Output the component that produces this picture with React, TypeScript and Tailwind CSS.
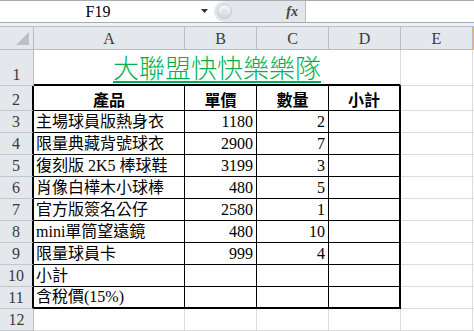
import React from "react"

const cellFont = "font-['Liberation_Serif','Noto_Sans_CJK_TC',serif]"
const cjk = "font-['Noto_Sans_CJK_TC','Liberation_Sans',sans-serif]"

type Item = { n: number; name: string; price?: number; qty?: number }

const items: Item[] = [
  { n: 3, name: "主場球員版熱身衣", price: 1180, qty: 2 },
  { n: 4, name: "限量典藏背號球衣", price: 2900, qty: 7 },
  { n: 5, name: "復刻版 2K5 棒球鞋", price: 3199, qty: 3 },
  { n: 6, name: "肖像白樺木小球棒", price: 480, qty: 5 },
  { n: 7, name: "官方版簽名公仔", price: 2580, qty: 1 },
  { n: 8, name: "mini單筒望遠鏡", price: 480, qty: 10 },
  { n: 9, name: "限量球員卡", price: 999, qty: 4 },
  { n: 10, name: "小計" },
  { n: 11, name: "含稅價(15%)" },
]

function RowHead({ n, inTable }: { n: number; inTable?: boolean }) {
  return (
    <div
      className={
        "w-[34px] shrink-0 h-full flex items-end justify-center pb-[1px] bg-[#e4e7eb] border-b border-[#c3c7cd] text-[16px] leading-[18px] text-[#3a3a3a] " +
        cellFont +
        (inTable ? " border-r-2 border-r-black" : " border-r border-r-[#b9bec5]")
      }
    >
      {n}
    </div>
  )
}

function Blank() {
  return (
    <>
      <div className="w-[72px] shrink-0 h-full border-r border-b border-[#dadcdd]" />
      <div className="flex-1 h-full border-b border-[#dadcdd]" />
    </>
  )
}

function DataRow({ item }: { item: Item }) {
  const last = item.n === 11
  const b = last ? " border-b-2" : " border-b"
  return (
    <div className="flex h-[22px]">
      <RowHead n={item.n} inTable />
      <div className={"w-[151px] shrink-0 h-full flex items-end pl-[2px] pb-[1px] border-r border-black text-[16px] leading-[18px] text-black whitespace-pre " + cellFont + b}>
        {item.name}
      </div>
      <div className={"w-[72px] shrink-0 h-full flex items-end justify-end pr-[3px] pb-[1px] border-r border-black text-[16px] leading-[18px] text-black " + cellFont + b}>
        {item.price}
      </div>
      <div className={"w-[72px] shrink-0 h-full flex items-end justify-end pr-[3px] pb-[1px] border-r border-black text-[16px] leading-[18px] text-black " + cellFont + b}>
        {item.qty}
      </div>
      <div className={"w-[72px] shrink-0 h-full border-r-2 border-black" + b} />
      <Blank />
    </div>
  )
}

export default function App() {
  return (
    <div className="w-[474px] h-[331px] overflow-hidden bg-white select-none">
      {/* formula bar */}
      <div className="h-[27px] bg-[#eef0f3] border-b border-[#b9bec5]">
        <div className="h-[23px] flex border-y border-[#a7acb3] bg-white">
          <div className="w-[214px] shrink-0 flex items-center relative">
            <div className="w-[196px] text-center text-[16px] leading-[20px] text-black font-['Liberation_Serif',serif]">F19</div>
            <svg className="absolute left-[201px] top-[8px]" width="7" height="4" viewBox="0 0 7 4">
              <path d="M0 0h7L3.5 4z" fill="#333" />
            </svg>
          </div>
          <div className="w-[92px] shrink-0 flex items-center bg-[#e3e6ea] rounded-l-[11px] border-r border-[#b9bec5] pl-[3px]">
            <div className="w-[15px] h-[15px] rounded-full bg-gradient-to-b from-[#fbfbfc] to-[#cfd3d8] border border-[#c6cad0] flex items-center justify-center">
              <div className="w-[5px] h-[5px] rounded-full bg-[#dfe2e6]" />
            </div>
            <span className="ml-auto mr-[7px] italic font-bold text-[14px] text-[#444] font-['Liberation_Serif',serif]">fx</span>
          </div>
          <div className="flex-1" />
        </div>
      </div>

      {/* column headers */}
      <div className={"flex h-[23px] bg-[#e4e7eb] border-b border-[#b9bec5] text-[16px] text-[#3a3a3a] " + cellFont}>
        <div className="w-[34px] shrink-0 h-full border-r border-[#b9bec5] relative">
          <svg className="absolute left-[16px] top-[5px]" width="13" height="13" viewBox="0 0 13 13">
            <path d="M13 0V13H0z" fill="#bcc1c8" />
          </svg>
        </div>
        {["A", "B", "C", "D", "E"].map((l, i) => (
          <div
            key={l}
            className={
              (i === 0 ? "w-[151px]" : "w-[72px]") +
              " shrink-0 h-full flex items-end justify-center pb-[1px] leading-[18px] border-r border-[#b9bec5]"
            }
          >
            {l}
          </div>
        ))}
        <div className="flex-1 h-full bg-[#f0b14a]" />
      </div>

      {/* row 1 */}
      <div className="flex h-[36px]">
        <RowHead n={1} />
        <div className={"w-[367px] shrink-0 h-full flex items-end justify-center border-b-2 border-r border-b-black border-r-[#dadcdd] " + cjk}>
          <span className="mb-[1px] inline-block border-b-2 border-[#00b050] text-[26px] leading-[28px] font-light text-[#00b050]">
            大聯盟快快樂樂隊
          </span>
        </div>
        <Blank />
      </div>

      {/* row 2 */}
      <div className="flex h-[25px]">
        <RowHead n={2} inTable />
        {[
          ["產品", "w-[151px] border-r"],
          ["單價", "w-[72px] border-r"],
          ["數量", "w-[72px] border-r"],
          ["小計", "w-[72px] border-r-2"],
        ].map(([t, c]) => (
          <div
            key={t}
            className={
              c +
              " shrink-0 h-full flex items-end justify-center pb-[1px] border-b border-black text-[16px] leading-[20px] font-bold text-black " +
              cjk
            }
          >
            {t}
          </div>
        ))}
        <Blank />
      </div>

      {items.map((it) => (
        <DataRow key={it.n} item={it} />
      ))}

      {/* row 12 */}
      <div className="flex h-[22px]">
        <RowHead n={12} />
        <div className="w-[151px] shrink-0 h-full border-r border-b border-[#dadcdd]" />
        <div className="w-[72px] shrink-0 h-full border-r border-b border-[#dadcdd]" />
        <div className="w-[72px] shrink-0 h-full border-r border-b border-[#dadcdd]" />
        <div className="w-[72px] shrink-0 h-full border-r border-b border-[#dadcdd]" />
        <Blank />
      </div>
    </div>
  )
}
